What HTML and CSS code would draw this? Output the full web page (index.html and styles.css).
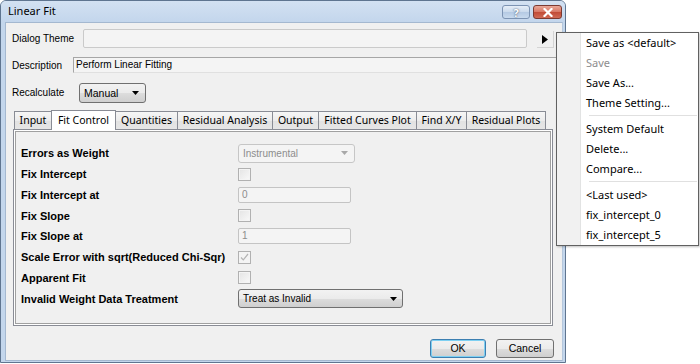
FILE: index.html
```html
<!DOCTYPE html>
<html lang="en">
<head>
    <meta charset="UTF-8">
    <meta name="viewport" content="width=device-width, initial-scale=1.0">
    <title>Linear Fit</title>
    <link rel="stylesheet" href="styles.css">
</head>
<body>
    <div class="window">
        <div class="titlebar">
            <span class="titlebar__title">Linear Fit</span>
            <div class="titlebar__buttons">
                <span class="caption-btn caption-btn--help">?</span>
                <span class="caption-btn caption-btn--close">
                    <svg width="10" height="9" viewBox="0 0 10 9"><path d="M1.5 1 L8.5 8 M8.5 1 L1.5 8" stroke="#fff" stroke-width="2.2" stroke-linecap="square"/></svg>
                </span>
            </div>
        </div>

        <div class="client">
            <div class="top-row top-row--theme">
                <span class="top-row__label top-row__label--theme">Dialog Theme</span>
                <span class="theme-box"></span>
                <span class="theme-arrow">
                    <svg width="6" height="9" viewBox="0 0 6 9"><path d="M0 0 L6 4.5 L0 9 Z" fill="#000"/></svg>
                </span>
            </div>
            <div class="top-row top-row--desc">
                <span class="top-row__label top-row__label--desc">Description</span>
                <span class="desc-box">Perform Linear Fitting</span>
            </div>
            <div class="top-row top-row--recalc">
                <span class="top-row__label top-row__label--recalc">Recalculate</span>
                <span class="combo combo--recalc">
                    <span class="combo__text">Manual</span>
                    <svg class="combo__arrow" width="7" height="4" viewBox="0 0 7 4"><path d="M0 0 L7 0 L3.5 4 Z" fill="#000"/></svg>
                </span>
            </div>

            <div class="tabs">
                <span class="tab" style="width: 38px">Input</span>
                <span class="tab tab--active" style="width: 65px">Fit Control</span>
                <span class="tab" style="width: 63px">Quantities</span>
                <span class="tab" style="width: 96px">Residual Analysis</span>
                <span class="tab" style="width: 47px">Output</span>
                <span class="tab" style="width: 99px">Fitted Curves Plot</span>
                <span class="tab" style="width: 51px">Find X/Y</span>
                <span class="tab" style="width: 80px">Residual Plots</span>
            </div>

            <div class="panel">
                <div class="panel__inner">
                    <div class="opt">
                        <span class="opt__label">Errors as Weight</span>
                        <span class="combo combo--disabled combo--weight">
                            <span class="combo__text">Instrumental</span>
                            <svg class="combo__arrow" width="7" height="4" viewBox="0 0 7 4"><path d="M0 0 L7 0 L3.5 4 Z" fill="#a8a8a8"/></svg>
                        </span>
                    </div>
                    <div class="opt">
                        <span class="opt__label">Fix Intercept</span>
                        <span class="check"></span>
                    </div>
                    <div class="opt">
                        <span class="opt__label">Fix Intercept at</span>
                        <span class="edit">0</span>
                    </div>
                    <div class="opt">
                        <span class="opt__label">Fix Slope</span>
                        <span class="check"></span>
                    </div>
                    <div class="opt">
                        <span class="opt__label">Fix Slope at</span>
                        <span class="edit">1</span>
                    </div>
                    <div class="opt">
                        <span class="opt__label">Scale Error with sqrt(Reduced Chi-Sqr)</span>
                        <span class="check check--on">
                            <svg width="9" height="8" viewBox="0 0 9 8"><path d="M1 4.5 L3.3 6.8 L8 1" fill="none" stroke="#b4b4b4" stroke-width="1.2"/></svg>
                        </span>
                    </div>
                    <div class="opt">
                        <span class="opt__label">Apparent Fit</span>
                        <span class="check"></span>
                    </div>
                    <div class="opt">
                        <span class="opt__label">Invalid Weight Data Treatment</span>
                        <span class="combo combo--treat">
                            <span class="combo__text">Treat as Invalid</span>
                            <svg class="combo__arrow" width="7" height="4" viewBox="0 0 7 4"><path d="M0 0 L7 0 L3.5 4 Z" fill="#000"/></svg>
                        </span>
                    </div>
                </div>
            </div>

            <div class="actions">
                <span class="button button--default">OK</span>
                <span class="button">Cancel</span>
            </div>
        </div>
    </div>

    <div class="menu">
        <div class="menu__item">Save as &lt;default&gt;</div>
        <div class="menu__item menu__item--disabled">Save</div>
        <div class="menu__item">Save As...</div>
        <div class="menu__item">Theme Setting...</div>
        <div class="menu__sep"></div>
        <div class="menu__item">System Default</div>
        <div class="menu__item">Delete...</div>
        <div class="menu__item">Compare...</div>
        <div class="menu__sep"></div>
        <div class="menu__item">&lt;Last used&gt;</div>
        <div class="menu__item">fix_intercept_0</div>
        <div class="menu__item">fix_intercept_5</div>
    </div>
</body>
</html>
```

FILE: styles.css
```css
:root {
    --color-face: #f0f0f0;
    --color-frame: #c3d6ec;
    --color-frame-edge: #5f7590;
    --color-tab-border: #898c95;
    --color-disabled: #8d8d8d;
    --font-ui: "Liberation Sans", Arial, sans-serif;
    --font-seg: "Noto Sans", "Open Sans", sans-serif;
}

html, body {
    margin: 0;
    padding: 0;
}

body {
    width: 700px;
    height: 364px;
    background: #fff;
    font-family: var(--font-ui);
    font-size: 10px;
    color: #000;
    position: relative;
    overflow: hidden;
}

.window {
    box-sizing: border-box;
    width: 566px;
    height: 363px;
    border: 1px solid var(--color-frame-edge);
    border-radius: 6px 6px 0 0;
    background: var(--color-frame);
    padding: 0 2px 1px 4px;
    display: flex;
    flex-direction: column;
}

/* title bar */
.titlebar {
    height: 21px;
    flex: none;
    display: flex;
    align-items: center;
    justify-content: space-between;
    background: linear-gradient(#d3e1f2, #c3d6ec);
    margin: 0 -2px 0 -4px;
    padding: 0 3px 0 7px;
    border-radius: 5px 5px 0 0;
}

.titlebar__title {
    font-family: var(--font-seg);
    font-size: 11px;
    color: #000;
    margin-top: -2px;
}

.titlebar__buttons {
    display: flex;
    gap: 3px;
    align-self: flex-start;
    margin-top: 4px;
}

.caption-btn {
    box-sizing: border-box;
    height: 14px;
    border-radius: 3px;
    display: flex;
    align-items: center;
    justify-content: center;
}

.caption-btn--help {
    width: 28px;
    border: 1px solid #7c93b3;
    background: linear-gradient(#e6eef8, #c9d9ec 50%, #b4c9e3 51%, #c8daee);
    color: #fff;
    font-family: var(--font-seg);
    font-weight: bold;
    font-size: 11px;
    text-shadow: 0 0 2px #5c6f88, 0 0 1px #5c6f88;
}

.caption-btn--close {
    width: 29px;
    border: 1px solid #7b3a32;
    background: linear-gradient(#e9a899, #d77663 50%, #c24b36 51%, #d06a55);
}

/* client area */
.client {
    flex: 1;
    background: var(--color-face);
    border: 1px solid #a4b8d0;
    border-right-color: #b5c7dc;
    display: flex;
    flex-direction: column;
}

.top-row {
    display: flex;
    align-items: center;
    margin-left: 6px;
}

.top-row__label {
    flex: none;
}

.top-row--theme {
    margin-top: 6px;
    height: 19px;
}

.top-row__label--theme {
    width: 71px;
}

.theme-box {
    box-sizing: border-box;
    width: 444px;
    height: 19px;
    border: 1px solid #cacaca;
    border-radius: 2px;
    background: #f4f4f4;
}

.theme-arrow {
    box-sizing: border-box;
    width: 17px;
    height: 17px;
    margin-left: 10px;
    margin-top: 2px;
    border-right: 1px solid #d4d4d4;
    border-bottom: 1px solid #d4d4d4;
    display: flex;
    align-items: center;
    justify-content: center;
}

.top-row--desc {
    margin-top: 9px;
    height: 16px;
}

.top-row__label--desc {
    width: 61px;
}

.desc-box {
    box-sizing: border-box;
    width: 490px;
    height: 16px;
    border: 1px solid #e0e0e0;
    border-top-color: #a6a6a6;
    border-left-color: #a6a6a6;
    background: #f4f4f4;
    padding-left: 2px;
    line-height: 14px;
}

.top-row--recalc {
    margin-top: 10px;
    height: 20px;
}

.top-row__label--recalc {
    width: 67px;
    margin-top: -2px;
}

/* combo boxes */
.combo {
    box-sizing: border-box;
    height: 19px;
    border: 1px solid #707070;
    border-radius: 3px;
    background: linear-gradient(#f2f2f2, #ebebeb 50%, #dddddd 51%, #cfcfcf);
    display: flex;
    align-items: center;
    justify-content: space-between;
    padding: 0 6px 0 4px;
}

.combo--recalc {
    width: 67px;
    height: 20px;
}

.combo--recalc .combo__text {
    font-size: 10.5px;
}

.combo--disabled {
    border-color: #c6c6c6;
    background: #f4f4f4;
    color: #8d8d8d;
}

.combo--weight {
    width: 117px;
}

.combo--treat {
    width: 165px;
    padding-right: 5px;
}

/* tabs */
.tabs {
    display: flex;
    align-items: flex-end;
    margin: 6px 0 0 8px;
    height: 20px;
    position: relative;
    z-index: 1;
}

.tab {
    box-sizing: border-box;
    height: 18px;
    flex: none;
    border: 1px solid var(--color-tab-border);
    border-bottom: none;
    margin-right: -1px;
    background: linear-gradient(#f6f6f6, #ececec 50%, #e2e2e2 51%, #e6e6e6);
    font-family: var(--font-seg);
    font-size: 10.5px;
    text-align: center;
    line-height: 16px;
}

.tab--active {
    height: 20px;
    margin-bottom: -1px;
    background: #fff;
    line-height: 19px;
    position: relative;
    z-index: 2;
}

.panel {
    box-sizing: border-box;
    width: 540px;
    height: 197px;
    margin-left: 7px;
    border: 1px solid var(--color-tab-border);
    background: #fff;
    padding: 1px;
}

.panel__inner {
    box-sizing: border-box;
    height: 100%;
    border: 1px solid #a0a0a0;
    background: var(--color-face);
    padding: 11px 0 0 5px;
}

.opt {
    height: 20.75px;
    display: flex;
    align-items: center;
}

.opt__label {
    width: 217px;
    flex: none;
    font-weight: bold;
    font-size: 11px;
}

.check {
    box-sizing: border-box;
    width: 13px;
    height: 13px;
    border: 1px solid #b1b1b1;
    background: linear-gradient(135deg, #e4e4e4, #f9f9f9);
    box-shadow: inset 0 0 0 1px #f4f4f4;
    display: flex;
    align-items: center;
    justify-content: center;
}

.check--on {
    background: #f4f4f4;
}

.edit {
    box-sizing: border-box;
    width: 113px;
    height: 16px;
    border: 1px solid #c4c4c4;
    border-radius: 2px;
    background: #f4f4f4;
    color: #8d8d8d;
    padding-left: 3px;
    line-height: 14px;
}

/* dialog buttons */
.actions {
    display: flex;
    justify-content: flex-end;
    gap: 10px;
    margin: 13px 8px 0 0;
}

.button {
    box-sizing: border-box;
    width: 58px;
    height: 19px;
    border: 1px solid #707070;
    border-radius: 3px;
    background: linear-gradient(#f2f2f2, #ebebeb 50%, #dddddd 51%, #cfcfcf);
    font-size: 10.5px;
    text-align: center;
    line-height: 17px;
}

.button--default {
    width: 56px;
    border-color: #3c7fb1;
    box-shadow: inset 0 0 0 1px #7ed0f2;
}

/* theme menu */
.menu {
    position: absolute;
    left: 556px;
    top: 32px;
    box-sizing: border-box;
    width: 143px;
    border: 1px solid #616161;
    padding: 0;
    background: linear-gradient(90deg, #f1f1f1 0, #f1f1f1 23px, #e2e3e3 23px, #e2e3e3 24px, #fff 24px);
    font-family: var(--font-seg);
    font-size: 11px;
    box-shadow: 1px 1px 2px rgba(0, 0, 0, 0.25);
}

.menu__item {
    height: 20px;
    line-height: 20px;
    padding-left: 29px;
    white-space: nowrap;
}

.menu__item--disabled {
    color: var(--color-disabled);
}

.menu__sep {
    height: 6px;
    position: relative;
}

.menu__sep::before {
    content: "";
    position: absolute;
    left: 32px;
    right: 1px;
    top: 2px;
    height: 1px;
    background: #e0e0e0;
    border-bottom: 1px solid #fff;
}
```
